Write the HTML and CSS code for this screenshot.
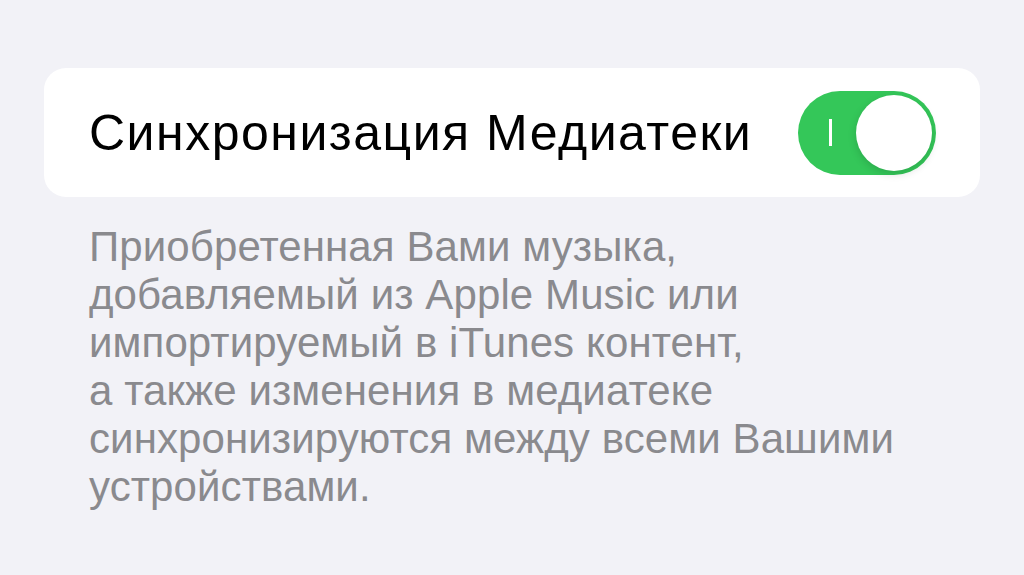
FILE: index.html
```html
<!DOCTYPE html>
<html lang="ru">
  <head>
    <meta name="viewport" content="width=device-width, initial-scale=1">
    <link rel="stylesheet" href="styles.css">
  </head>
  <body>
    <div class="container">
      <div class="card">
        <div class="card_title">Синхронизация Медиатеки</div>
        <div class="toggle">
          <span class="toggle_mark"></span>
          <span class="toggle_knob"></span>
        </div>
      </div>
      <div class="footer_text">
        Приобретенная Вами музыка,<br>
        добавляемый из Apple Music или<br>
        импортируемый в iTunes контент,<br>
        а также изменения в медиатеке<br>
        синхронизируются между всеми Вашими<br>
        устройствами.
      </div>
    </div>
  </body>
</html>
```

FILE: styles.css
```css
html {
  height: 100%;
  width: 100%;
}

body {
  height: 100%;
  width: 100%;
  margin: 0;
  background-color: #f2f2f7;
  font-family: 'Liberation Sans', Arial, sans-serif;
}

.container {
  padding: 68px 44px 0 44px;
  display: flex;
  flex-direction: column;
}

.card {
  background-color: #ffffff;
  border-radius: 22px;
  height: 129px;
  display: flex;
  align-items: center;
  justify-content: space-between;
  padding: 0 44px 0 45px;
}

.card_title {
  font-size: 50px;
  letter-spacing: 1.5px;
  color: #000000;
}

.toggle {
  width: 138px;
  height: 84px;
  border-radius: 42px;
  background-color: #34c759;
  display: flex;
  align-items: center;
  justify-content: space-between;
  padding: 0 4px 0 31px;
  box-sizing: border-box;
}

.toggle_mark {
  width: 3px;
  height: 27px;
  background-color: #ffffff;
}

.toggle_knob {
  width: 76px;
  height: 76px;
  border-radius: 50%;
  background-color: #ffffff;
  box-shadow: 0 3px 8px rgba(0, 0, 0, 0.15);
}

.footer_text {
  padding: 26px 0 0 45px;
  font-size: 42px;
  line-height: 48px;
  letter-spacing: 0.1px;
  color: #8a8a8e;
}
```
